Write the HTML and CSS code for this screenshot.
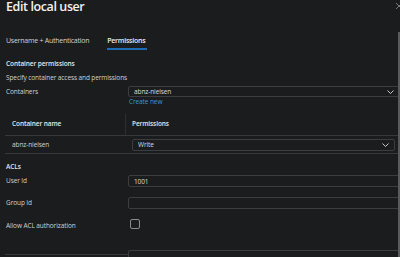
FILE: index.html
```html
<!DOCTYPE html>
<html lang="en">
<head>
  <meta charset="UTF-8">
  <title>Edit local user</title>
  <link rel="stylesheet" href="styles.css">
</head>
<body>

<!-- BLADE HEADER -->
<div class="blade">
  <h1 class="title">Edit local user</h1>
  <svg class="close" width="8" height="8" viewBox="0 0 8 8"><path d="M1 1 L7 7 M7 1 L1 7" stroke="#7a7a7a" stroke-width="1"/></svg>

  <div class="tabs">
    <span class="tab">Username + Authentication</span>
    <span class="tab selected">Permissions</span>
  </div>

  <!-- CONTAINER PERMISSIONS -->
  <h2 class="section">Container permissions</h2>
  <p class="desc">Specify container access and permissions</p>

  <div class="row">
    <label class="label">Containers</label>
    <div class="field">
      <div class="select">
        <span>abnz-nielsen</span>
        <svg class="chev" width="7" height="4" viewBox="0 0 7 4"><path d="M0.5 0.5 L3.5 3.5 L6.5 0.5" fill="none" stroke="#c8c8c8" stroke-width="1"/></svg>
      </div>
      <a class="link" href="#">Create new</a>
    </div>
  </div>

  <div class="grid">
    <div class="grid-head">
      <div class="col name">Container name</div>
      <div class="col perm sep">Permissions</div>
    </div>
    <div class="grid-row">
      <div class="col name">abnz-nielsen</div>
      <div class="col perm">
        <div class="select small">
          <span>Write</span>
          <svg class="chev" width="7" height="4" viewBox="0 0 7 4"><path d="M0.5 0.5 L3.5 3.5 L6.5 0.5" fill="none" stroke="#c8c8c8" stroke-width="1"/></svg>
        </div>
      </div>
    </div>
  </div>

  <!-- ACLS -->
  <h2 class="section acl">ACLs</h2>

  <div class="row">
    <label class="label">User Id</label>
    <div class="field"><div class="input">1001</div></div>
  </div>
  <div class="row gap">
    <label class="label">Group Id</label>
    <div class="field"><div class="input"></div></div>
  </div>
  <div class="row gap check-row">
    <label class="label">Allow ACL authorization</label>
    <div class="field"><div class="checkbox"></div></div>
  </div>

  <div class="row last">
    <div class="label rule"></div>
    <div class="field"><div class="input tall"></div></div>
  </div>
</div>

<div class="scrollbar"></div>

</body>
</html>
```

FILE: styles.css
```css
* { margin: 0; padding: 0; box-sizing: border-box; }

body {
  width: 400px;
  height: 257px;
  overflow: hidden;
  position: relative;
  background-color: #1b1c1e;
  color: #d2d2d2;
  font-family: "Open Sans", "Noto Sans", sans-serif;
  font-size: 6.5px;
  letter-spacing: -0.1px;
}

.blade {
  padding-left: 6px;
}

.title {
  font-size: 12.5px;
  font-weight: 600;
  line-height: 14px;
  color: #f2f2f2;
  letter-spacing: -0.4px;
}

.close {
  position: absolute;
  top: 2px;
  left: 395px;
}

.tabs {
  display: flex;
  gap: 18px;
  margin-top: 22px;
  font-size: 7px;
  letter-spacing: -0.25px;
}

.tab {
  line-height: 10px;
  padding-bottom: 2px;
  border-bottom: 2px solid transparent;
  color: #d2d2d2;
}

.tab.selected {
  font-weight: 600;
  color: #ececec;
  border-bottom-color: #1c6cb4;
  padding-right: 2px;
}

.section {
  font-size: 6.5px;
  font-weight: 600;
  line-height: 10px;
  margin-top: 9px;
  color: #e6e6e6;
}

.desc {
  line-height: 10px;
  margin-top: 4px;
}

.row {
  display: flex;
  align-items: flex-start;
  margin-top: 3px;
}

.row.gap { margin-top: 10px; }

.label {
  width: 122px;
  line-height: 12px;
}

.field {
  flex: 1;
}

.select, .input {
  height: 11px;
  border: 1px solid #3d3d3f;
  border-radius: 2px;
  padding: 0 5px;
  display: flex;
  align-items: center;
  justify-content: space-between;
  color: #dcdcdc;
}

.input { height: 12px; }

.select.small { height: 12px; }

.link {
  display: block;
  color: #3a96dd;
  text-decoration: none;
  line-height: 10px;
  padding-left: 1px;
}

.grid {
  margin-top: 7px;
  margin-left: -1px;
  margin-right: 2px;
}

.grid-head, .grid-row {
  display: flex;
  border-bottom: 1px solid #38383a;
}

.grid-head { height: 22px; }
.grid-row { height: 18px; align-items: center; }

.col.name {
  width: 120px;
  padding-left: 7px;
}

.col.perm {
  flex: 1;
  padding-left: 6px;
  padding-right: 3px;
}

.grid-head .col {
  font-weight: 600;
  line-height: 10px;
  padding-top: 5px;
  color: #e6e6e6;
}

.grid-head .col.sep {
  border-left: 1px solid #2e2e30;
}

.grid-row .col.perm { padding-left: 7px; }

.section.acl { margin-top: 8px; }

.check-row .label { margin-top: 1px; }

.checkbox {
  width: 10px;
  height: 10px;
  margin-left: 2px;
  border: 1px solid #8c8c8c;
  border-radius: 2px;
}

.row.last { margin-top: 18px; }

.rule {
  height: 5px;
  margin-left: -1px;
  width: 123px;
  border-bottom: 1px solid #38383a;
}

.input.tall { height: 9px; border-bottom: none; }

.scrollbar {
  position: absolute;
  top: 32px;
  left: 398px;
  width: 2px;
  height: 225px;
  background-color: #5b5b5d;
}
```
